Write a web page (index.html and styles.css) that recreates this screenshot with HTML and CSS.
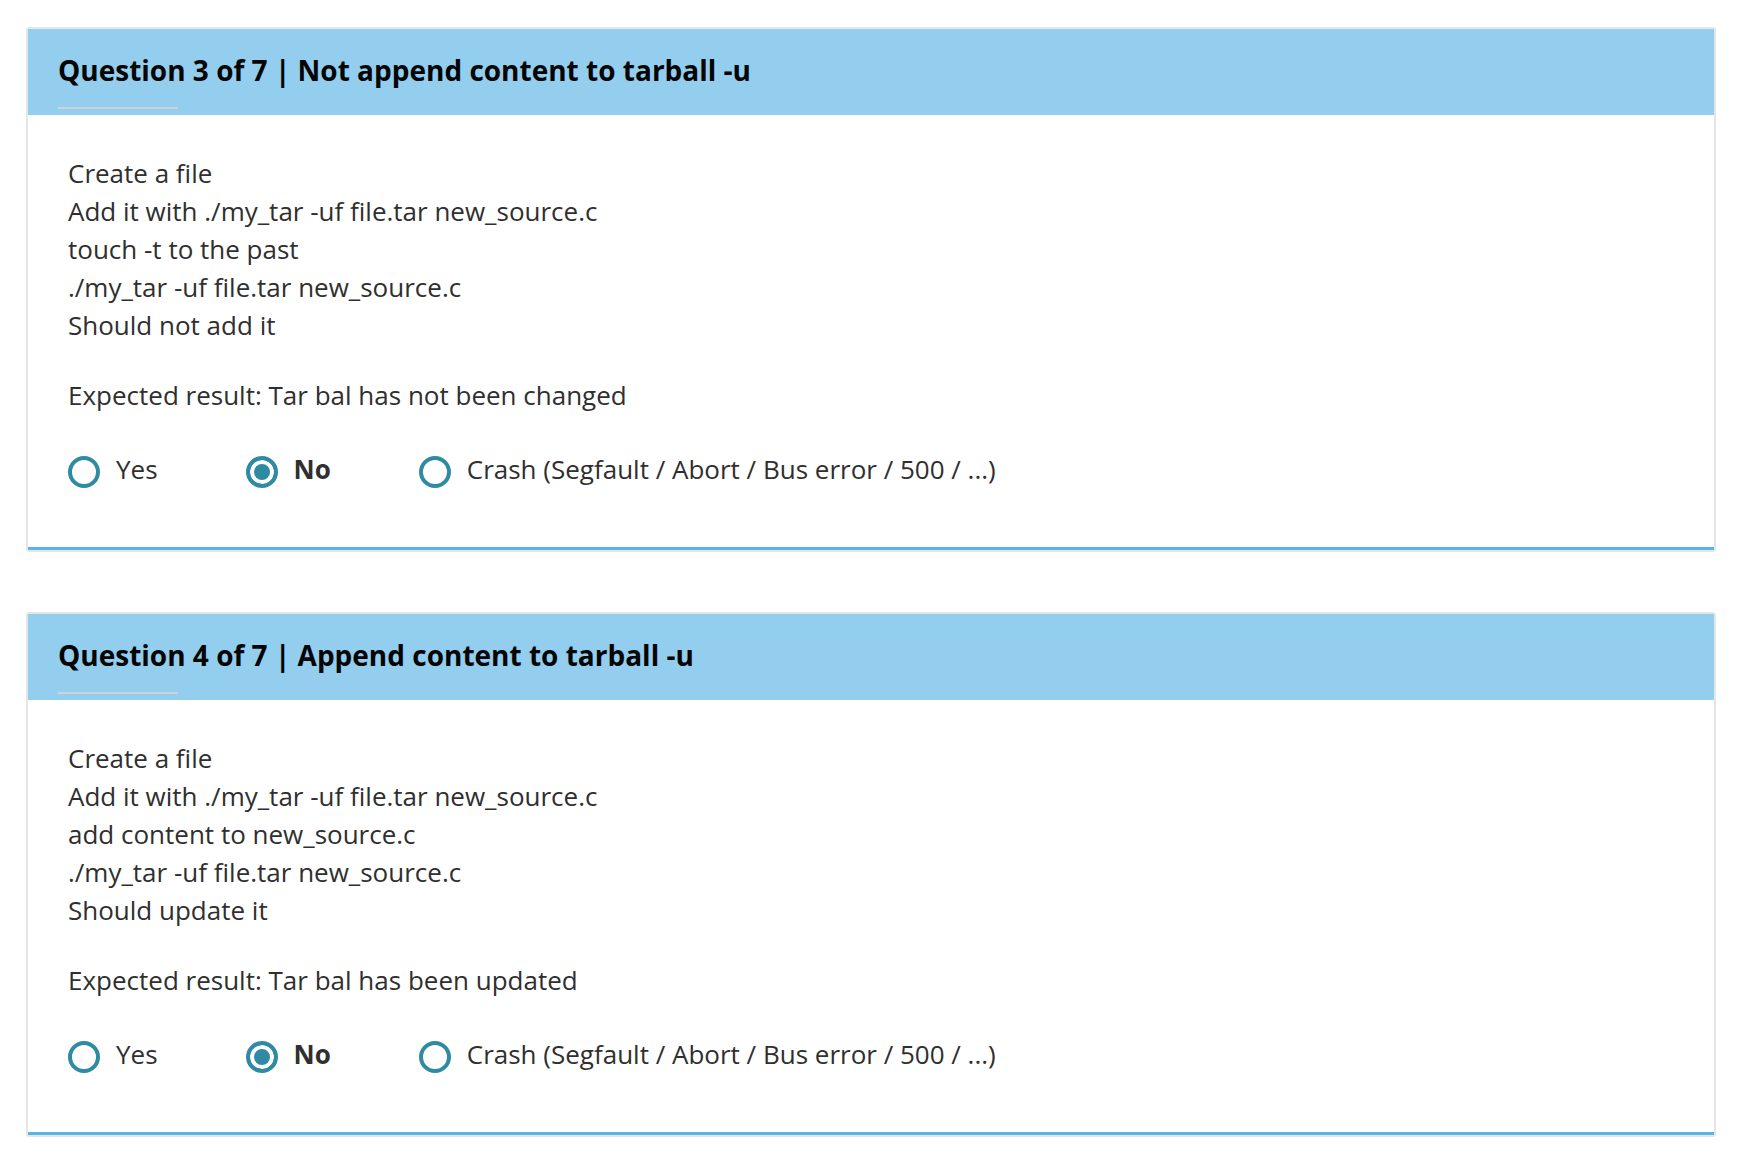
FILE: index.html
```html
<!DOCTYPE html>
<html lang="en">
<head>
<meta charset="utf-8">
<title>Questions</title>
<link rel="stylesheet" href="styles.css">
</head>
<body>
<main class="page">
  <section class="card">
    <div class="card-inner">
      <header class="card-head">
        <h2 class="card-title">Question 3 of 7 | Not append content to tarball -u</h2>
        <div class="title-bar"></div>
      </header>
      <div class="card-body">
        <p class="steps">Create a file<br>Add it with ./my_tar -uf file.tar new_source.c<br>touch -t to the past<br>./my_tar -uf file.tar new_source.c<br>Should not add it</p>
        <p class="expected">Expected result: Tar bal has not been changed</p>
        <div class="choices">
          <label class="choice"><input class="radio" type="radio" name="q3"><span class="choice-text">Yes</span></label>
          <label class="choice"><input class="radio" type="radio" name="q3" checked><span class="choice-text">No</span></label>
          <label class="choice"><input class="radio" type="radio" name="q3"><span class="choice-text">Crash (Segfault / Abort / Bus error / 500 / ...)</span></label>
        </div>
      </div>
    </div>
  </section>
  <section class="card">
    <div class="card-inner">
      <header class="card-head">
        <h2 class="card-title">Question 4 of 7 | Append content to tarball -u</h2>
        <div class="title-bar"></div>
      </header>
      <div class="card-body">
        <p class="steps">Create a file<br>Add it with ./my_tar -uf file.tar new_source.c<br>add content to new_source.c<br>./my_tar -uf file.tar new_source.c<br>Should update it</p>
        <p class="expected">Expected result: Tar bal has been updated</p>
        <div class="choices">
          <label class="choice"><input class="radio" type="radio" name="q4"><span class="choice-text">Yes</span></label>
          <label class="choice"><input class="radio" type="radio" name="q4" checked><span class="choice-text">No</span></label>
          <label class="choice"><input class="radio" type="radio" name="q4"><span class="choice-text">Crash (Segfault / Abort / Bus error / 500 / ...)</span></label>
        </div>
      </div>
    </div>
  </section>
</main>
</body>
</html>
```

FILE: styles.css
```css
html, body {
  margin: 0;
  padding: 0;
  background: #ffffff;
}

body {
  font-family: "Open Sans", "Liberation Sans", sans-serif;
  color: #2f2f2f;
}

.page {
  padding: 27px 28px 0 26px;
  display: flex;
  flex-direction: column;
  gap: 60px;
}

.card {
  border: 2px solid #e6e6e6;
  border-radius: 3px;
  background: #ffffff;
}

.card-inner {
  border-bottom: 3px solid #56b7e4;
}

.card-head {
  background: #93ceee;
  height: 86px;
  box-sizing: border-box;
  padding: 22px 30px 0 30px;
}

.card-title {
  margin: 0;
  font-size: 28px;
  font-weight: 700;
  line-height: 38px;
  color: #050505;
}

.title-bar {
  width: 120px;
  height: 2px;
  margin-top: 18px;
  background: #d0d3d6;
}

.card-body {
  padding: 39px 40px 59px 40px;
  font-size: 26px;
  line-height: 38px;
}

.steps {
  margin: 0;
}

.expected {
  margin: 32px 0 0 0;
}

.choices {
  margin-top: 36px;
  display: flex;
  align-items: center;
}

.choice {
  display: flex;
  align-items: center;
  margin-right: 88px;
  cursor: pointer;
}

.radio {
  appearance: none;
  -webkit-appearance: none;
  margin: 6px 16px 0 0;
  width: 32px;
  height: 32px;
  box-sizing: border-box;
  border: 4px solid #2f8aa3;
  border-radius: 50%;
  background: #ffffff;
  flex: none;
}

.radio:checked {
  background: #2f8aa3;
  box-shadow: inset 0 0 0 4px #ffffff;
}

.radio:checked + .choice-text {
  font-weight: 700;
}
```
